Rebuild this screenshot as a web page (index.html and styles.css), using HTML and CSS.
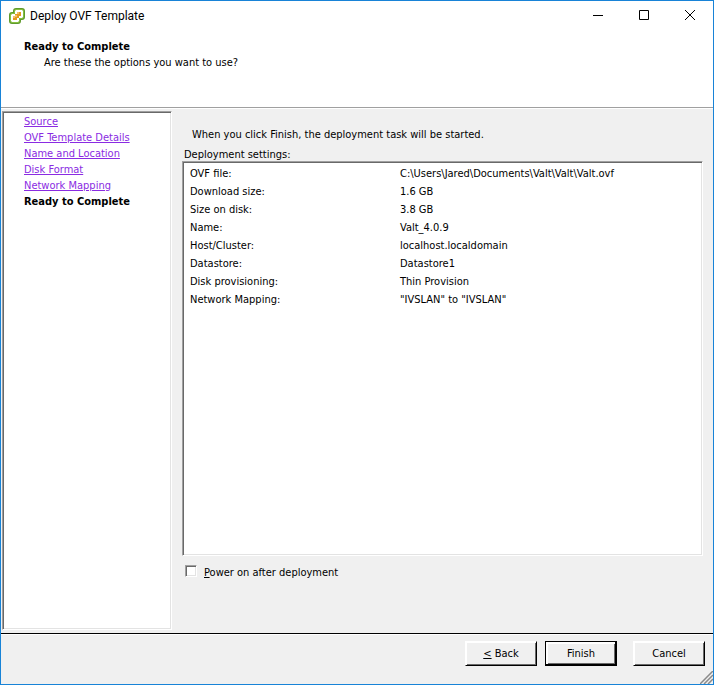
FILE: index.html
```
<!DOCTYPE html>
<html lang="en">
<head>
    <meta charset="UTF-8">
    <meta name="viewport" content="width=device-width, initial-scale=1.0">
    <title>Deploy OVF Template</title>
    <link rel="stylesheet" href="styles.css">
</head>
<body>
    <div class="window">
        <header class="titlebar">
            <svg class="app-icon" width="16" height="16" viewBox="0 0 16 16">
                <path d="M5 5V3Q5 1 7 1h6q2 0 2 2v6q0 2-2 2h-2v2q0 2-2 2H3q-2 0-2-2V7q0-2 2-2z" fill="#fff" stroke="#5f9a2c" stroke-width="2"/>
                <path d="M5.500 5.500V3Q5.500 1.500 7 1.500h6q1.500 0 1.500 1.500v6q0 1.500-1.500 1.500h-2.500v2.500q0 1.500-1.500 1.500H3q-1.500 0-1.500-1.500V7q0-1.500 1.500-1.500z" fill="none" stroke="#86bf3f"/>
                <path d="M8 4h4v4h-2v2H8v2H4V8h2V6h2z" fill="#e39a1f"/>
                <path d="M8 4h2v2H8zM6 7h2v2H6zM4 8h2v2H4z" fill="#f3c069"/>
            </svg>
            <h1>Deploy OVF Template</h1>
            <div class="window-buttons">
                <button type="button" aria-label="Minimize">
                    <svg width="12" height="12" viewBox="0 0 12 12"><path d="M1 5.500h10" stroke="#000"/></svg>
                </button>
                <button type="button" aria-label="Maximize">
                    <svg width="12" height="12" viewBox="0 0 12 12"><path d="M1.500 0.500h9v9h-9z" fill="none" stroke="#000"/></svg>
                </button>
                <button type="button" aria-label="Close">
                    <svg width="12" height="12" viewBox="0 0 12 12"><path d="M1 0l10 10M11 0L1 10" stroke="#000"/></svg>
                </button>
            </div>
        </header>

        <div class="heading">
            <h2>Ready to Complete</h2>
            <p>Are these the options you want to use?</p>
        </div>

        <div class="content">
            <nav class="steps sunken">
                <a href="#source">Source</a>
                <a href="#details">OVF Template Details</a>
                <a href="#name">Name and Location</a>
                <a href="#disk">Disk Format</a>
                <a href="#network">Network Mapping</a>
                <strong>Ready to Complete</strong>
            </nav>

            <main>
                <p class="intro">When you click Finish, the deployment task will be started.</p>
                <p class="settings-title">Deployment settings:</p>
                <div class="settings sunken">
                    <table>
                        <tr><th>OVF file:</th><td>C:\Users\Jared\Documents\Valt\Valt\Valt.ovf</td></tr>
                        <tr><th>Download size:</th><td>1.6 GB</td></tr>
                        <tr><th>Size on disk:</th><td>3.8 GB</td></tr>
                        <tr><th>Name:</th><td>Valt_4.0.9</td></tr>
                        <tr><th>Host/Cluster:</th><td>localhost.localdomain</td></tr>
                        <tr><th>Datastore:</th><td>Datastore1</td></tr>
                        <tr><th>Disk provisioning:</th><td>Thin Provision</td></tr>
                        <tr><th>Network Mapping:</th><td>"IVSLAN" to "IVSLAN"</td></tr>
                    </table>
                </div>
                <div class="power">
                    <input type="checkbox" id="powerOn">
                    <label for="powerOn"><u>P</u>ower on after deployment</label>
                </div>
            </main>
        </div>

        <footer>
            <button type="button" class="btn"><u>&lt;</u> Back</button>
            <button type="button" class="btn default">Finish</button>
            <button type="button" class="btn cancel">Cancel</button>
            <svg class="grip" width="13" height="13" viewBox="0 0 13 13">
                <path d="M0 13L13 0M4 13l9-9M8 13l5-5" stroke="#8a8a8a" stroke-width="1.500"/>
            </svg>
        </footer>
    </div>
</body>
</html>
```

FILE: styles.css
```
* {
    box-sizing: border-box;
}
body {
    margin: 0;
    font-family: "DejaVu Sans Condensed", "DejaVu Sans", sans-serif;
    font-size: 11px;
    line-height: 16px;
    color: #000;
}
h1, h2, p {
    margin: 0;
}
.window {
    display: flex;
    flex-direction: column;
    min-height: 100vh;
    border: 1px solid #1883d7;
    background: #f0f0f0;
}
.titlebar {
    display: flex;
    align-items: center;
    height: 30px;
    padding-left: 8px;
    background: #fff;
}
.titlebar h1 {
    flex: 1;
    margin-left: 5px;
    font-family: Roboto, sans-serif;
    font-size: 12px;
    font-weight: normal;
}
.window-buttons {
    display: flex;
}
.window-buttons button {
    display: flex;
    align-items: center;
    justify-content: center;
    width: 46px;
    height: 28px;
    padding: 0;
    border: none;
    background: none;
}
.heading {
    height: 77px;
    padding: 8px 23px;
    background: #fff;
    border-bottom: 1px solid #a0a0a0;
}
.heading h2, .steps strong {
    font-size: 11px;
    font-weight: bold;
    white-space: nowrap;
}
.heading p {
    padding-left: 20px;
}
.sunken {
    border: 1px solid;
    border-color: #a0a0a0 #fff #fff #a0a0a0;
    box-shadow: inset 1px 1px #696969, inset -1px -1px #e3e3e3;
    background: #fff;
}
.content {
    display: flex;
    flex: 1;
    padding: 2px 10px 3px 1px;
    border-top: 1px solid #fff;
    border-bottom: 1px solid #000;
}
.steps {
    display: flex;
    flex-direction: column;
    align-items: flex-start;
    width: 170px;
    padding: 2px 21px;
}
.steps a {
    color: #8a2be2;
}
main {
    display: flex;
    flex: 1;
    flex-direction: column;
    margin-left: 10px;
    padding-top: 16px;
}
.intro {
    padding-left: 10px;
}
.settings-title {
    margin-top: 6px;
    padding-left: 2px;
    line-height: 12px;
}
.settings {
    flex: 1;
    padding: 3px 7px;
}
table {
    width: 100%;
    border-collapse: collapse;
}
th, td {
    padding: 0;
    line-height: 18px;
    text-align: left;
    font-weight: normal;
}
th {
    width: 210px;
}
.power {
    display: flex;
    align-items: flex-start;
    gap: 7px;
    padding: 9px 3px 49px;
}
.power input {
    appearance: none;
    width: 12px;
    height: 12px;
    margin: 0;
    border: 1px solid;
    border-color: #a0a0a0 #fff #fff #a0a0a0;
    box-shadow: inset 1px 1px #696969, inset -1px -1px #e3e3e3;
    background: #fff;
}
.power input:checked {
    background: #000;
}
footer {
    position: relative;
    display: flex;
    justify-content: flex-end;
    gap: 8px;
    height: 50px;
    padding: 6px 8px;
    border-top: 1px solid #fff;
}
.btn {
    width: 72px;
    height: 25px;
    padding: 0;
    border: 1px solid;
    border-color: #fff #000 #000 #fff;
    box-shadow: inset 1px 1px #fff, inset -1px -1px #696969;
    background: #f0f0f0;
    font: inherit;
    color: #000;
}
.btn.default {
    border-color: #000;
    box-shadow: inset -1px -1px #000, inset 2px 2px #fff, inset -2px -2px #696969;
}
.btn.cancel {
    margin-left: 8px;
}
.grip {
    position: absolute;
    right: 0;
    bottom: 0;
}
```
